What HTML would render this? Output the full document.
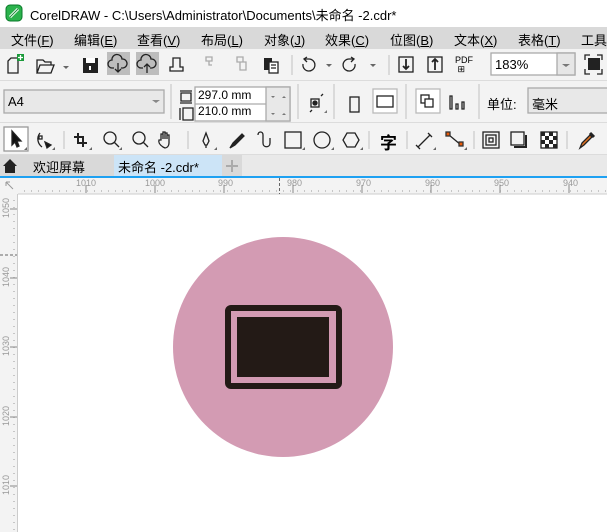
<!DOCTYPE html>
<html><head><meta charset="utf-8"><style>
*{margin:0;padding:0;box-sizing:border-box}
body{width:607px;height:532px;overflow:hidden;background:#f3f3f3;font-family:"Liberation Sans","Noto Sans CJK SC",sans-serif;position:relative;font-size:13px;color:#000}
.a{position:absolute}
.t{white-space:nowrap}
</style></head><body>
<div class="a" style="left:0;top:0;width:607px;height:27px;background:#fff"></div>
<svg class="a" style="left:5px;top:4px" width="18" height="18"><rect x="1" y="1" width="16" height="16" rx="4" fill="#2bb24c" stroke="#0a7a2a"/><path d="M5 13 L13 5" stroke="#fff" stroke-width="3"/><path d="M5 13 L13 5" stroke="#1a8a3a" stroke-width="1"/></svg>
<div class="a t" style="left:30px;top:5px;font-size:13px">CorelDRAW - C:\Users\Administrator\Documents\未命名 -2.cdr*</div>
<div class="a" style="left:0;top:27px;width:607px;height:22px;background:#d9d9d9"></div>
<div class="a t" style="left:11px;top:30px">文件(<u>F</u>)</div>
<div class="a t" style="left:74px;top:30px">编辑(<u>E</u>)</div>
<div class="a t" style="left:137px;top:30px">查看(<u>V</u>)</div>
<div class="a t" style="left:201px;top:30px">布局(<u>L</u>)</div>
<div class="a t" style="left:264px;top:30px">对象(<u>J</u>)</div>
<div class="a t" style="left:325px;top:30px">效果(<u>C</u>)</div>
<div class="a t" style="left:390px;top:30px">位图(<u>B</u>)</div>
<div class="a t" style="left:454px;top:30px">文本(<u>X</u>)</div>
<div class="a t" style="left:518px;top:30px">表格(<u>T</u>)</div>
<div class="a t" style="left:581px;top:30px">工具</div>
<div class="a" style="left:0;top:80px;width:607px;height:1px;background:#dcdcdc"></div>
<div class="a" style="left:0;top:122px;width:607px;height:1px;background:#dcdcdc"></div>
<div class="a" style="left:0;top:154px;width:607px;height:1px;background:#dcdcdc"></div>
<svg class="a" style="left:0;top:49px" width="607" height="106" fill="none" stroke="#222" stroke-width="1.3">
<path d="M8 24V12l3-3h7v15z"/><rect x="17" y="5" width="7" height="7" fill="#1a9a3a" stroke="none"/><path d="M20.5 6v5M18 8.5h5" stroke="#fff"/>
<path d="M37 24V11h6l2 2h6v3M37 24l3-8h14l-3 8z" />
<path d="M63 17l3 3 3-3z" fill="#666" stroke="none"/>
<rect x="83" y="9" width="15" height="15" fill="#222" stroke="none"/><rect x="86" y="9" width="9" height="5" fill="#fff" stroke="none"/><rect x="89" y="17" width="2" height="4" fill="#fff" stroke="none"/>
<rect x="107" y="3" width="23" height="23" fill="#bdbdbd" stroke="none"/><rect x="136" y="3" width="23" height="23" fill="#bdbdbd" stroke="none"/>
<path d="M114 19h-2a4 4 0 0 1 0-8a5 5 0 0 1 10-1a4 4 0 0 1 1 9h-2M118 14v9M115 20l3 3 3-3"/>
<path d="M143 19h-2a4 4 0 0 1 0-8a5 5 0 0 1 10-1a4 4 0 0 1 1 9h-2M147 24v-9M144 18l3-3 3 3"/>
<path d="M170 22v-4h3v-9h7v9h3v4z"/>
<path d="M206 8h6v4h-6zM209 12v4h3" stroke="#aaa"/><path d="M237 8h6v5h-6zM240 13h6v8h-6z" stroke="#aaa"/>
<rect x="264" y="9" width="8" height="12" fill="#222" stroke="none"/><rect x="269" y="13" width="9" height="11" fill="#fff"/><path d="M271 16h5M271 19h5"/>
<line x1="292" y1="6" x2="292" y2="26" stroke="#ccc"/>
<path d="M303 15a6 6 0 1 0 6-5h-4M307 8l-3 2 3 3"/><path d="M326 15l3 3 3-3z" fill="#666" stroke="none"/>
<path d="M355 15a6 6 0 1 1-6-5h4M351 8l3 2-3 3"/><path d="M370 15l3 3 3-3z" fill="#666" stroke="none"/>
<line x1="389" y1="6" x2="389" y2="26" stroke="#ccc"/>
<rect x="399" y="8" width="14" height="15"/><path d="M406 10v10M403 17l3 3 3-3" stroke-width="1.8"/>
<rect x="428" y="8" width="14" height="15"/><path d="M435 21v-10M432 13l3-3 3 3" stroke-width="1.8"/>
<rect x="491" y="4" width="84" height="22" fill="#fff" stroke="#aaa"/><rect x="557" y="4" width="18" height="22" fill="#e6e6e6" stroke="#aaa"/><path d="M562 15l4 3 4-3z" fill="#777" stroke="none"/>
<rect x="588" y="9" width="12" height="12" fill="#222" stroke="none"/><path d="M585 11V6h5M597 6h5v5M602 20v5h-5M590 25h-5v-5"/>
<rect x="4" y="41" width="160" height="23" fill="#e8e8e8" stroke="#aaa"/><path d="M152 51l4 3 4-3z" fill="#888" stroke="none"/>
<line x1="171" y1="35" x2="171" y2="70" stroke="#ccc"/>
<path d="M180 42h12M180 54h12M181 44h10v8h-10z"/><path d="M180 59v12M183 59h10v12h-10z"/>
<rect x="195" y="38" width="95" height="34" fill="#fff" stroke="#aaa"/><line x1="195" y1="55" x2="290" y2="55" stroke="#aaa"/><rect x="266" y="38" width="24" height="34" fill="#e8e8e8" stroke="#aaa"/>
<path d="M271 47l2 2 2-2zM271 64l2 2 2-2z" fill="#777" stroke="none"/><path d="M282 49l2-2 2 2zM282 66l2-2 2 2z" fill="#777" stroke="none"/>
<line x1="298" y1="35" x2="298" y2="70" stroke="#ccc"/>
<rect x="311" y="50" width="8" height="8"/><circle cx="315" cy="54" r="2" fill="#222"/><path d="M312 61l-2 2M321 47l2-2"/><path d="M324 64l3-3v3z" fill="#777" stroke="none"/>
<line x1="334" y1="35" x2="334" y2="70" stroke="#ccc"/>
<rect x="350" y="48" width="9" height="15"/>
<rect x="373" y="40" width="24" height="24" fill="#fff" stroke="#bbb"/><rect x="377" y="47" width="16" height="11"/>
<line x1="406" y1="35" x2="406" y2="70" stroke="#ccc"/>
<rect x="416" y="40" width="24" height="24" fill="#fff" stroke="#bbb"/><rect x="421" y="46" width="8" height="8"/><rect x="425" y="50" width="8" height="8" fill="#fff"/>
<path d="M450 47h2v13h-2zM456 55h2v5h-2zM462 53h2v7h-2z"/>
<line x1="479" y1="35" x2="479" y2="70" stroke="#ccc"/>
<rect x="528" y="39" width="85" height="25" fill="#e8e8e8" stroke="#aaa"/>
<rect x="4" y="78" width="24" height="24" fill="#fff" stroke="#999"/><path d="M12 82v14l3-3 2 5 2-1-2-5h4z" fill="#111"/><path d="M24 101l3-3v3z" fill="#666" stroke="none"/>
<path d="M40 84c-4 5-2 11 2 14" /><rect x="39" y="87" width="3" height="3" fill="#fff"/><path d="M45 93l6 3-4 3z" fill="#111"/><path d="M52 101l3-3v3z" fill="#666" stroke="none"/>
<line x1="64" y1="82" x2="64" y2="100" stroke="#ccc"/>
<path d="M78 84v10h9M74 88h9v10" stroke-width="2"/><path d="M89 101l3-3v3z" fill="#666" stroke="none"/>
<circle cx="110" cy="89" r="6"/><path d="M114 93l5 5"/><path d="M119 101l3-3v3z" fill="#666" stroke="none"/>
<circle cx="139" cy="89" r="6"/><path d="M143 93l5 5"/>
<path d="M163 98c-3-2-5-4-4-7l2 0 0-6 2 0 0 5 0-7 2 0 0 7 0-6 2 0 0 6 0-4 2 0v8c0 3-2 5-4 5z"/>
<line x1="188" y1="82" x2="188" y2="100" stroke="#ccc"/>
<path d="M206 84l-3 8 2 4h2l2-4zM206 96v3"/><path d="M214 101l3-3v3z" fill="#666" stroke="none"/>
<path d="M230 99l3-5 9-9 2 2-9 9z" fill="#222"/>
<path d="M258 86c0-4 5-4 5 0v8c0 5 7 5 7 0v-5"/>
<rect x="285" y="83" width="16" height="16"/><path d="M302 101l3-3v3z" fill="#666" stroke="none"/>
<circle cx="322" cy="91" r="8"/><path d="M331 101l3-3v3z" fill="#666" stroke="none"/>
<path d="M347 84h8l4 7-4 7h-8l-4-7z"/><path d="M360 101l3-3v3z" fill="#666" stroke="none"/>
<line x1="369" y1="82" x2="369" y2="100" stroke="#ccc"/>
<line x1="407" y1="82" x2="407" y2="100" stroke="#ccc"/>
<path d="M418 98l12-12M416 96l4 4M428 84l4 4"/><path d="M433 101l3-3v3z" fill="#666" stroke="none"/>
<path d="M449 86l12 10"/><rect x="446" y="83" width="4" height="4" fill="#e85a0a" stroke="#333"/><rect x="459" y="93" width="4" height="4" fill="#e85a0a" stroke="#333"/><path d="M464 101l3-3v3z" fill="#666" stroke="none"/>
<line x1="474" y1="82" x2="474" y2="100" stroke="#ccc"/>
<rect x="483" y="83" width="16" height="16"/><rect x="486" y="86" width="10" height="10"/><rect x="489" y="89" width="4" height="4"/>
<rect x="511" y="83" width="13" height="13"/><path d="M526 86v12h-12" stroke-width="2"/>
<rect x="541" y="83" width="16" height="16" fill="#fff"/>
<path d="M541 83h4v4h-4zM549 83h4v4h-4zM545 87h4v4h-4zM553 87h4v4h-4zM541 91h4v4h-4zM549 91h4v4h-4zM545 95h4v4h-4zM553 95h4v4h-4z" fill="#222" stroke="none"/>
<line x1="567" y1="82" x2="567" y2="100" stroke="#ccc"/>
<path d="M580 99l2-5 8-8 2 2-8 8z" fill="#e07020"/><path d="M590 84l4 4" stroke-width="3"/>
</svg>
<div class="a t" style="left:455px;top:56px;font-size:9px;line-height:9px">PDF<br>&nbsp;⊞</div>
<div class="a t" style="left:495px;top:57px;font-size:13px">183%</div>
<div class="a t" style="left:8px;top:94px;font-size:13px">A4</div>
<div class="a t" style="left:198px;top:88px;font-size:12px">297.0 mm</div>
<div class="a t" style="left:198px;top:104px;font-size:12px">210.0 mm</div>
<div class="a t" style="left:487px;top:94px;font-size:13px">单位:</div>
<div class="a t" style="left:532px;top:94px;font-size:13px">毫米</div>
<div class="a t" style="left:380px;top:129px;font-size:17px;font-weight:bold">字</div>
<div class="a" style="left:0;top:155px;width:607px;height:21px;background:#e9e9e9"></div>
<div class="a" style="left:0;top:155px;width:114px;height:21px;background:#d9d9d9"></div>
<div class="a" style="left:114px;top:155px;width:108px;height:21px;background:#cce4f7"></div>
<div class="a" style="left:222px;top:155px;width:20px;height:21px;background:#d9d9d9"></div>
<svg class="a" style="left:2px;top:158px" width="16" height="16"><path d="M1 8L8 1l7 7h-2v7H3V8z" fill="#222"/></svg>
<div class="a t" style="left:33px;top:157px;font-size:13px">欢迎屏幕</div>
<div class="a t" style="left:118px;top:157px;font-size:13px">未命名 -2.cdr*</div>
<svg class="a" style="left:222px;top:155px" width="20" height="21"><path d="M10 5v12M4 11h12" stroke="#aaa" stroke-width="2"/></svg>
<div class="a" style="left:0;top:176px;width:607px;height:2px;background:#1ea1f2"></div>
<svg class="a" style="left:0;top:178px" width="607" height="354">
<rect x="0" y="0" width="607" height="16" fill="#f3f3f3"/><rect x="0" y="0" width="17" height="354" fill="#f3f3f3"/>
<rect x="18" y="16" width="589" height="338" fill="#fff"/>
<line x1="18" y1="16" x2="607" y2="16" stroke="#ccc"/><line x1="17.5" y1="16" x2="17.5" y2="354" stroke="#ccc"/>
<g font-family="Liberation Sans" font-size="9" fill="#999">
<text x="76" y="8">1010</text><text x="145" y="8">1000</text><text x="218" y="8">990</text><text x="287" y="8">980</text><text x="356" y="8">970</text><text x="425" y="8">960</text><text x="494" y="8">950</text><text x="563" y="8">940</text>
</g>
<g stroke="#888"><path d="M86 7v8M155 7v8M224 7v8M293 7v8M362 7v8M431 7v8M500 7v8M569 7v8"/></g>
<g stroke="#999" stroke-dasharray="1 6" stroke-width="1"><path d="M24 13H607"/><path d="M14 22V354"/></g>
<path d="M279.5 0v16" stroke="#666" stroke-dasharray="3 2"/>
<path d="M0 77h17" stroke="#666" stroke-dasharray="3 2"/>
<g stroke="#888"><path d="M10 31h7M10 100h7M10 169h7M10 239h7M10 308h7"/></g>
<g font-family="Liberation Sans" font-size="9" fill="#999">
<text transform="translate(9,40) rotate(-90)">1050</text>
<text transform="translate(9,109) rotate(-90)">1040</text>
<text transform="translate(9,178) rotate(-90)">1030</text>
<text transform="translate(9,248) rotate(-90)">1020</text>
<text transform="translate(9,317) rotate(-90)">1010</text>
</g>
<path d="M6 4l7 7M6 4v4M6 4h4" stroke="#999"/>
</svg>
<svg class="a" style="left:0;top:0" width="607" height="532">
<circle cx="283" cy="347" r="110" fill="#d39bb3"/>
<rect x="228" y="308" width="111" height="78" rx="3" fill="none" stroke="#231a16" stroke-width="6"/>
<rect x="237" y="317" width="92" height="60" fill="#231a16"/>
</svg>
</body></html>
